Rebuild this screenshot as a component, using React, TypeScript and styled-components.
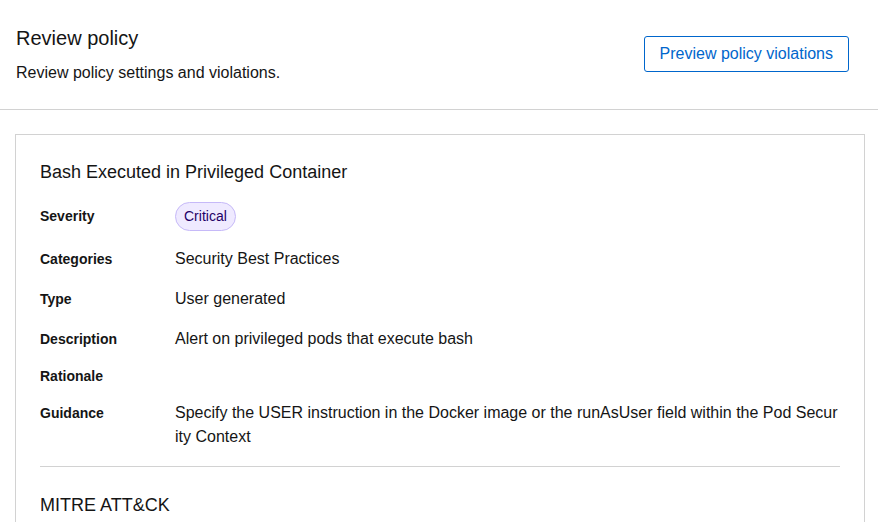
import React from "react";
import styled, { createGlobalStyle } from "styled-components";

const GlobalStyle = createGlobalStyle`
  html, body {
    margin: 0;
    padding: 0;
    background: #ffffff;
  }
  body {
    font-family: "Liberation Sans", Arial, sans-serif;
    color: #151515;
    font-size: 16px;
  }
`;

const Header = styled.header`
  display: flex;
  justify-content: space-between;
  align-items: center;
  padding: 23px 29px 24px 16px;
  border-bottom: 1px solid #d2d2d2;
`;

const HeaderText = styled.div`
  display: flex;
  flex-direction: column;
  gap: 8px;
`;

const PageTitle = styled.h1`
  margin: 0;
  font-size: 20px;
  line-height: 30px;
  font-weight: 400;
`;

const Subtitle = styled.p`
  margin: 0;
  font-size: 16px;
  line-height: 24px;
`;

const OutlineButton = styled.button`
  font-family: inherit;
  font-size: 16px;
  line-height: 24px;
  color: #0066cc;
  background: #ffffff;
  border: 1px solid #0066cc;
  border-radius: 3px;
  padding: 5px 15px;
  cursor: pointer;
`;

const Main = styled.main`
  padding: 24px 13px 0 15px;
`;

const Card = styled.section`
  border: 1px solid #d2d2d2;
  padding: 24px 24px 40px;
`;

const SectionTitle = styled.h2`
  margin: 0 0 16px;
  font-size: 18px;
  line-height: 27px;
  font-weight: 400;
`;

const DescList = styled.dl`
  margin: 0;
  display: flex;
  flex-direction: column;
  gap: 16px;
`;

const Row = styled.div`
  display: grid;
  grid-template-columns: 135px 1fr;
  align-items: baseline;
`;

const Term = styled.dt`
  font-size: 14px;
  line-height: 18px;
  font-weight: 700;
`;

const Details = styled.dd`
  margin: 0;
  font-size: 16px;
  line-height: 24px;
  word-break: break-all;
`;

const Label = styled.span`
  display: inline-block;
  font-size: 14px;
  line-height: 21px;
  padding: 3px 8px;
  border-radius: 999px;
  background: #efeaff;
  border: 1px solid #c6b9f8;
  color: #1f0066;
`;

const Divider = styled.hr`
  border: 0;
  border-top: 1px solid #d2d2d2;
  margin: 17px 0 25px;
`;

type Item = { term: string; value?: React.ReactNode };

const items: Item[] = [
  { term: "Severity", value: <Label>Critical</Label> },
  { term: "Categories", value: "Security Best Practices" },
  { term: "Type", value: "User generated" },
  { term: "Description", value: "Alert on privileged pods that execute bash" },
  { term: "Rationale" },
  {
    term: "Guidance",
    value:
      "Specify the USER instruction in the Docker image or the runAsUser field within the Pod Security Context",
  },
];

export default function App() {
  return (
    <>
      <GlobalStyle />
      <Header>
        <HeaderText>
          <PageTitle>Review policy</PageTitle>
          <Subtitle>Review policy settings and violations.</Subtitle>
        </HeaderText>
        <OutlineButton type="button">Preview policy violations</OutlineButton>
      </Header>
      <Main>
        <Card>
          <SectionTitle>Bash Executed in Privileged Container</SectionTitle>
          <DescList>
            {items.map((it) => (
              <Row key={it.term}>
                <Term>{it.term}</Term>
                <Details>{it.value}</Details>
              </Row>
            ))}
          </DescList>
          <Divider />
          <SectionTitle>MITRE ATT&amp;CK</SectionTitle>
        </Card>
      </Main>
    </>
  );
}
